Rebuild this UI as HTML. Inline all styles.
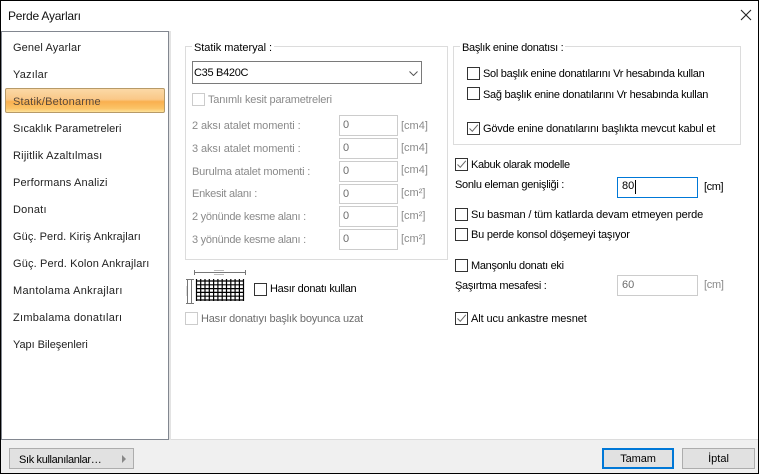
<!DOCTYPE html>
<html><head><meta charset="utf-8">
<style>
html,body{margin:0;padding:0;background:#fff;}
body{width:761px;height:475px;position:relative;overflow:hidden;font-family:"Liberation Sans",sans-serif;font-size:11px;color:#000;}
.a{position:absolute;box-sizing:border-box;}
.t{position:absolute;white-space:nowrap;line-height:14px;height:14px;}
.g{color:#8a8a8a;}
.s{color:#6d6d6d;}
.i{position:absolute;box-sizing:border-box;border:1px solid #ccc;background:#fff;height:21px;width:59px;left:339px;color:#6d6d6d;line-height:19px;padding-left:3px;}
.c{position:absolute;box-sizing:border-box;width:13px;height:13px;border:1px solid #333;background:#fff;}
.c.d{border-color:#ccc;}
.c svg{position:absolute;left:0;top:0;}
.n{color:#222;}
</style></head>
<body>
<!-- window frame -->
<div class="a" style="left:0;top:0;width:759px;height:474px;border:1px solid #000;"></div>
<div class="t" style="left:8px;top:9px;font-size:12px;color:#111;letter-spacing:-.22px;">Perde Ayarları</div>
<svg class="a" style="left:740px;top:9px" width="12" height="12" viewBox="0 0 12 12"><path d="M1 1L11 11M11 1L1 11" stroke="#222" stroke-width="1.1" fill="none"/></svg>

<!-- bottom bar -->
<div class="a" style="left:1px;top:440px;width:757px;height:33px;background:#f0f0f0;"></div>
<div class="a" style="left:171px;top:439px;width:587px;height:1px;background:#dcdcdc;"></div>

<!-- sidebar -->
<div class="a" style="left:1px;top:31px;width:168px;height:409px;border:1px solid #828790;background:#fff;"></div>
<div class="a" style="left:169px;top:31px;width:2px;height:409px;background:#e3e3e3;"></div>
<div class="a" style="left:5px;top:88px;width:160px;height:25px;border:1px solid #b79a68;border-radius:2px;background:linear-gradient(#fbd9a6 0%,#fac888 45%,#f9b04f 55%,#fbc468 85%,#fde29a 100%);"></div>

<div class="t n" style="left:13px;top:41px;letter-spacing:.12px;">Genel Ayarlar</div>
<div class="t n" style="left:13px;top:68px;letter-spacing:.2px;">Yazılar</div>
<div class="t" style="left:13px;top:95px;letter-spacing:.22px;color:#5a4a3a;">Statik/Betonarme</div>
<div class="t n" style="left:13px;top:122px;letter-spacing:.04px;">Sıcaklık Parametreleri</div>
<div class="t n" style="left:13px;top:149px;letter-spacing:.22px;">Rijitlik Azaltılması</div>
<div class="t n" style="left:13px;top:176px;letter-spacing:.16px;">Performans Analizi</div>
<div class="t n" style="left:13px;top:203px;letter-spacing:.22px;">Donatı</div>
<div class="t n" style="left:13px;top:230px;letter-spacing:.07px;">Güç. Perd. Kiriş Ankrajları</div>
<div class="t n" style="left:13px;top:257px;letter-spacing:.14px;">Güç. Perd. Kolon Ankrajları</div>
<div class="t n" style="left:13px;top:284px;letter-spacing:.32px;">Mantolama Ankrajları</div>
<div class="t n" style="left:13px;top:311px;letter-spacing:.27px;">Zımbalama donatıları</div>
<div class="t n" style="left:13px;top:338px;letter-spacing:-.05px;">Yapı Bileşenleri</div>

<!-- Statik materyal group -->
<div class="a" style="left:185px;top:46px;width:263px;height:214px;border:1px solid #dcdcdc;"></div>
<div class="t" style="left:192px;top:41px;background:#fff;padding:0 2px;letter-spacing:-.05px;">Statik materyal :</div>
<div class="a" style="left:192px;top:61px;width:230px;height:23px;border:1px solid #7a7a7a;background:#fff;"></div>
<div class="t" style="left:194px;top:66px;letter-spacing:-.3px;">C35 B420C</div>
<svg class="a" style="left:409px;top:71px" width="9" height="5" viewBox="0 0 9 5"><path d="M.5 .5L4.5 4.5L8.5 .5" stroke="#555" fill="none"/></svg>

<div class="c d" style="left:192px;top:93px;"></div>
<div class="t g" style="left:208px;top:93px;letter-spacing:-.19px;">Tanımlı kesit parametreleri</div>

<div class="t g" style="left:192px;top:119px;letter-spacing:-.09px;">2 aksı atalet momenti :</div>
<div class="i" style="top:115px;">0</div>
<div class="t g" style="left:401px;top:119px;">[cm4]</div>
<div class="t g" style="left:192px;top:142px;letter-spacing:-.09px;">3 aksı atalet momenti :</div>
<div class="i" style="top:138px;">0</div>
<div class="t g" style="left:401px;top:141px;">[cm4]</div>
<div class="t g" style="left:192px;top:165px;letter-spacing:-.17px;">Burulma atalet momenti :</div>
<div class="i" style="top:161px;">0</div>
<div class="t g" style="left:401px;top:163px;">[cm4]</div>
<div class="t g" style="left:192px;top:187px;letter-spacing:-.27px;">Enkesit alanı :</div>
<div class="i" style="top:184px;height:20px;">0</div>
<div class="t g" style="left:401px;top:186px;">[cm²]</div>
<div class="t g" style="left:192px;top:210px;letter-spacing:-.26px;">2 yönünde kesme alanı :</div>
<div class="i" style="top:206px;">0</div>
<div class="t g" style="left:401px;top:209px;">[cm²]</div>
<div class="t g" style="left:192px;top:233px;letter-spacing:-.26px;">3 yönünde kesme alanı :</div>
<div class="i" style="top:229px;">0</div>
<div class="t g" style="left:401px;top:232px;">[cm²]</div>

<!-- hasir icon -->
<svg class="a" style="left:186px;top:268px" width="62" height="38" viewBox="0 0 62 38">
<path d="M8.5 2V7M59.5 2V7M8 4.5H60" stroke="#777" fill="none"/>
<path d="M28 2.5H38M28 6.5H38" stroke="#bbb" fill="none"/>
<path d="M1.5 11V35M5.5 11V35M0 11.5H8M0 35.5H8" stroke="#777" fill="none"/>
<path d="M0 18V28" stroke="#bbb" fill="none"/>
<path d="M10.5 11V33M14.7 11V33M19 11V33M23.3 11V33M27.6 11V33M31.9 11V33M36.2 11V33M40.5 11V33M44.8 11V33M49.1 11V33M53.4 11V33M57.5 11V33M10 13H58M10 16.8H58M10 20.6H58M10 24.4H58M10 28.2H58M10 32H58" stroke="#000" stroke-width="1.2" fill="none"/>
</svg>
<div class="c" style="left:254px;top:283px;"></div>
<div class="t" style="left:270px;top:282px;letter-spacing:-.28px;">Hasır donatı kullan</div>
<div class="c d" style="left:185px;top:312px;"></div>
<div class="t s" style="left:201px;top:312px;letter-spacing:-.2px;">Hasır donatıyı başlık boyunca uzat</div>

<!-- Baslik -->
<div class="a" style="left:453px;top:46px;width:288px;height:99px;border:1px solid #dcdcdc;"></div>
<div class="t" style="left:460px;top:41px;background:#fff;padding:0 2px;letter-spacing:-.3px;">Başlık enine donatısı :</div>
<div class="c" style="left:467px;top:67px;"></div>
<div class="t" style="left:483px;top:67px;letter-spacing:-.29px;">Sol başlık enine donatılarını Vr hesabında kullan</div>
<div class="c" style="left:467px;top:87px;"></div>
<div class="t" style="left:483px;top:88px;letter-spacing:-.29px;">Sağ başlık enine donatılarını Vr hesabında kullan</div>
<div class="c" style="left:467px;top:122px;"><svg width="11" height="11" viewBox="0 0 11 11"><path d="M1.5 5.5L4.3 8.3L9.8 1.8" stroke="#666" stroke-width="1" fill="none"/></svg></div>
<div class="t" style="left:483px;top:122px;letter-spacing:-.19px;">Gövde enine donatılarını başlıkta mevcut kabul et</div>

<div class="c" style="left:455px;top:158px;"><svg width="11" height="11" viewBox="0 0 11 11"><path d="M1.5 5.5L4.3 8.3L9.8 1.8" stroke="#666" stroke-width="1" fill="none"/></svg></div>
<div class="t" style="left:471px;top:158px;letter-spacing:-.35px;">Kabuk olarak modelle</div>
<div class="t" style="left:455px;top:178px;letter-spacing:-.3px;">Sonlu eleman genişliği :</div>
<div class="a" style="left:617px;top:177px;width:81px;height:21px;border:1px solid #0078d7;background:#fff;"></div>
<div class="t" style="left:622px;top:179px;">80</div>
<div class="a" style="left:635px;top:180px;width:1px;height:14px;background:#000;"></div>
<div class="t" style="left:704px;top:180px;letter-spacing:-.4px;">[cm]</div>

<div class="c" style="left:455px;top:208px;"></div>
<div class="t" style="left:471px;top:208px;letter-spacing:-.13px;">Su basman / tüm katlarda devam etmeyen perde</div>
<div class="c" style="left:455px;top:228px;"></div>
<div class="t" style="left:471px;top:228px;letter-spacing:-.22px;">Bu perde konsol döşemeyi taşıyor</div>
<div class="c" style="left:455px;top:259px;"></div>
<div class="t" style="left:471px;top:259px;letter-spacing:-.3px;">Manşonlu donatı eki</div>
<div class="t" style="left:455px;top:279px;letter-spacing:-.3px;">Şaşırtma mesafesi :</div>
<div class="a" style="left:617px;top:275px;width:81px;height:21px;border:1px solid #ccc;background:#fff;color:#6d6d6d;line-height:19px;padding-left:4px;">60</div>
<div class="t g" style="left:704px;top:278px;letter-spacing:-.3px;">[cm]</div>
<div class="c" style="left:455px;top:312px;"><svg width="11" height="11" viewBox="0 0 11 11"><path d="M1.5 5.5L4.3 8.3L9.8 1.8" stroke="#666" stroke-width="1" fill="none"/></svg></div>
<div class="t" style="left:471px;top:312px;letter-spacing:-.1px;">Alt ucu ankastre mesnet</div>

<!-- buttons -->
<div class="a" style="left:9px;top:448px;width:125px;height:21px;border:1px solid #adadad;background:#e1e1e1;"></div>
<div class="t" style="left:19px;top:453px;letter-spacing:-.35px;">Sık kullanılanlar…</div>
<svg class="a" style="left:122px;top:455px" width="5" height="8" viewBox="0 0 5 8"><path d="M0 0L4 4L0 8Z" fill="#888"/></svg>
<div class="a" style="left:602px;top:448px;width:72px;height:21px;border:2px solid #0078d7;background:#e1e1e1;text-align:center;line-height:19px;letter-spacing:-.1px;">Tamam</div>
<div class="a" style="left:682px;top:448px;width:73px;height:21px;border:1px solid #adadad;background:#e1e1e1;text-align:center;line-height:21px;">İptal</div>
</body></html>
